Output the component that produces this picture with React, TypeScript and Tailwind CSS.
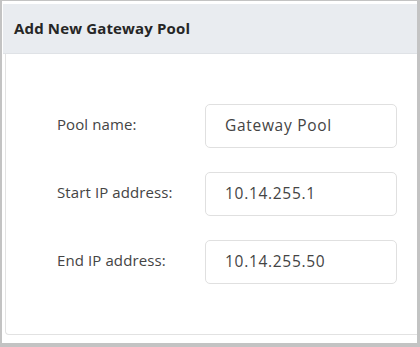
export default function App() {
  const rows = [
    { label: "Pool name:", value: "Gateway Pool" },
    { label: "Start IP address:", value: "10.14.255.1" },
    { label: "End IP address:", value: "10.14.255.50" },
  ];
  return (
    <div
      className="w-[420px] h-[347px] bg-[#c3c3c3] pl-[2px] pt-[1px] pr-[3px] pb-[4px]"
      style={{ fontFamily: '"Open Sans", "Noto Sans", sans-serif' }}
    >
      <div className="w-full h-full bg-white flex flex-col pt-[3px]">
        <div className="h-[50px] ml-[1px] bg-[#e9ecf0] border-b border-[#dfe2e6] flex items-center pl-[11px]">
          <span className="text-[15px] font-bold text-[#262626] tracking-[0.15px]">Add New Gateway Pool</span>
        </div>
        <div className="flex-1 ml-[3px] mb-[8px] border-l border-b border-[#e2e2e2] rounded-bl-[4px] pt-[50px] flex flex-col gap-[24px]">
          {rows.map((r) => (
            <div key={r.label} className="flex items-start">
              <div className="w-[148px] ml-[51px] shrink-0 pt-[9px] text-[15px] leading-[22px] text-[#444] tracking-[0.1px] whitespace-nowrap">{r.label}</div>
              <div className="w-[192px] h-[44px] border border-[#e0e0e0] rounded-[5px] flex items-center pl-[19px] text-[15.5px] text-[#444] tracking-[0.7px]">
                {r.value}
              </div>
            </div>
          ))}
        </div>
      </div>
    </div>
  );
}
